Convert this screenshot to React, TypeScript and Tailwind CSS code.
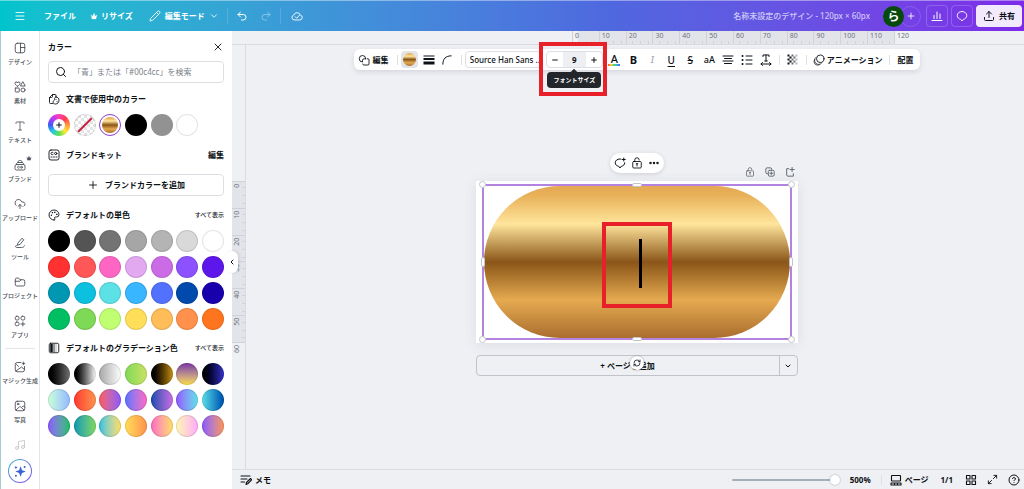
import type { ReactNode } from 'react';
import { useState } from 'react';
import {
    ChevronDown,
    ChevronLeft,
    CircleQuestionMark,
    CloudUpload,
    Ellipsis,
    Maximize2,
    Menu,
    Minus,
    Music,
    Palette,
    Pencil,
    Plus,
    Redo2,
    RefreshCw,
    Search,
    Type,
    Undo2,
    Upload,
    X
} from 'lucide-react';

interface IconProps {
    className?: string;
    children: ReactNode;
}

// Base for all icons that lucide doesn't have
function Icon({ className = 'size-3', children }: IconProps) {
    return (
        <svg
            viewBox="0 0 24 24"
            className={`shrink-0 ${className}`}
            fill="none"
            stroke="currentColor"
            strokeWidth="1.8"
            strokeLinecap="round"
            strokeLinejoin="round"
            aria-hidden="true"
        >
            {children}
        </svg>
    );
}

const Crown = ({ className }: { className: string }) => (
    <Icon className={className}>
        <path d="M6 21h12l3-13-5 5-4-10-4 10-5-5z" fill="currentColor" strokeWidth="0.500" />
    </Icon>
);

const LockIcon = ({ className }: { className: string }) => (
    <Icon className={className}>
        <rect x="3.500" y="9" width="17" height="13" rx="2" />
        <path d="M7.500 9V6a4.500 4.500 0 0 1 9 0M12 13v5M10.500 13.500h3" />
    </Icon>
);

const BubbleIcon = ({ className }: { className: string }) => (
    <Icon className={className}>
        <path d="M12 3c5.500 0 9.500 3.400 9.500 8 0 4-3 7-7 7.800L12 22l-2.500-3.200c-4-.8-7-3.800-7-7.800 0-4.600 4-8 9.500-8z" />
    </Icon>
);

const sideItems = [
    {
        label: 'デザイン',
        icon: (
            <Icon>
                <rect x="2.500" y="2.500" width="19" height="19" rx="4" />
                <path d="M13 2.500v19M13 11h8.500" />
            </Icon>
        )
    },
    {
        label: '素材',
        icon: (
            <Icon>
                <path d="M7 10.500C3 8 2 6.500 2 4.800a2.500 2.500 0 0 1 5-.8 2.500 2.500 0 0 1 5 .8C12 6.500 11 8 7 10.500z" />
                <path d="M18 2l4.500 8h-9z" />
                <rect x="2.500" y="14" width="8" height="8" rx="1" />
                <circle cx="18" cy="18" r="4" />
            </Icon>
        )
    },
    { label: 'テキスト', icon: <Type className="size-3" strokeWidth={1.6} /> },
    {
        label: 'ブランド',
        crown: true,
        icon: (
            <Icon>
                <rect x="2" y="11" width="20" height="11" rx="3" />
                <path d="M5 11c0-3 1-4 3-4h8c2 0 3 1 3 4M8 7c0-3 1-4 3-4h2c2 0 3 1 3 4" />
                <path d="M10.500 15a2 2 0 1 0 0 3" />
                <circle cx="15" cy="16.500" r="1.800" />
            </Icon>
        )
    },
    { label: 'アップロード', icon: <CloudUpload className="size-3" strokeWidth={1.8} /> },
    {
        label: 'ツール',
        icon: (
            <Icon>
                <path d="M8 12l8-9.500 3.500 3L12 15l-4.500 1z" />
                <path d="M6 17c-4-1-4 4 0 4h9c3 0 5-1 6-3.500" />
            </Icon>
        )
    },
    {
        label: 'プロジェクト',
        icon: (
            <Icon>
                <path d="M2.500 7a3 3 0 0 1 3-3H9l3 3.500h6.500a3 3 0 0 1 3 3V17a3 3 0 0 1-3 3h-13a3 3 0 0 1-3-3z" />
                <path d="M2.500 10.500h9l2.500-3" />
            </Icon>
        )
    },
    {
        label: 'アプリ',
        icon: (
            <Icon>
                <rect x="2.500" y="2.500" width="7.500" height="7.500" rx="3" />
                <rect x="14" y="2.500" width="7.500" height="7.500" rx="3" />
                <rect x="2.500" y="14" width="7.500" height="7.500" rx="3" />
                <path d="M17.750 14v8M13.750 18h8" />
            </Icon>
        )
    }
];

const solidColors = [
    'bg-black', 'bg-[#545454]', 'bg-[#737373]', 'bg-[#a6a6a6]', 'bg-[#b4b4b4]', 'bg-[#d9d9d9]', 'bg-white',
    'bg-[#ff3131]', 'bg-[#ff5757]', 'bg-[#ff66c4]', 'bg-[#e2a9f1]', 'bg-[#cb6ce6]', 'bg-[#8c52ff]', 'bg-[#5e17eb]',
    'bg-[#0097b2]', 'bg-[#0cc0df]', 'bg-[#5ce1e6]', 'bg-[#38b6ff]', 'bg-[#5271ff]', 'bg-[#004aad]', 'bg-[#1800ad]',
    'bg-[#00bf63]', 'bg-[#7ed957]', 'bg-[#c1ff72]', 'bg-[#ffde59]', 'bg-[#ffbd59]', 'bg-[#ff914d]', 'bg-[#ff751f]'
];

const gradientColors = [
    'bg-linear-to-r from-black to-[#737373]',
    'bg-linear-to-r from-black to-white',
    'bg-linear-to-r from-[#a6a6a6] to-white',
    'bg-linear-to-r from-[#7ed957] to-[#c9e265]',
    'bg-linear-to-r from-black to-[#c89116]',
    'bg-linear-to-b from-[#7a2ea0] to-[#ffde38]',
    'bg-linear-to-r from-black to-[#3533cd]',
    'bg-linear-to-r from-[#cdffd8] to-[#94b9ff]',
    'bg-linear-to-r from-[#ff3131] to-[#ff914d]',
    'bg-linear-to-r from-[#ff5757] to-[#8c52ff]',
    'bg-linear-to-r from-[#5170ff] to-[#ff66c4]',
    'bg-linear-to-r from-[#004aad] to-[#cb6ce6]',
    'bg-linear-to-r from-[#8c52ff] to-[#5ce1e6]',
    'bg-linear-to-r from-[#5de0e6] to-[#004aad]',
    'bg-linear-to-r from-[#8c52ff] to-[#00bf63]',
    'bg-linear-to-r from-[#0097b2] to-[#7ed957]',
    'bg-linear-to-r from-[#0cc0df] to-[#ffde59]',
    'bg-linear-to-r from-[#ffde59] to-[#ff914d]',
    'bg-linear-to-r from-[#ff66c4] to-[#ffde59]',
    'bg-linear-to-r from-[#fff7ad] to-[#ffa9f9]',
    'bg-linear-to-r from-[#8c52ff] to-[#ff914d]'
];

const gold = 'bg-[linear-gradient(180deg,#e5a953_0%,#e8b058_6%,#ffe59c_25%,#8a5518_50%,#e5aa50_75%,#aa6d2e_100%)]';

const Divider = () => <span className="h-2.5 w-px shrink-0 bg-[#dfe0e4]" />;

function Header() {
    return (
        <header className="flex h-[31px] shrink-0 items-center border-t border-white/40 bg-linear-to-r from-[#00c4cc] via-[#4f67df] via-60% to-[#7d2ae8] font-bold text-white">
            <div className="flex flex-1 items-center pl-3.5">
                <button aria-label="メニュー"><Menu className="size-3" strokeWidth={1.8} /></button>
                <button className="ml-[18px]">ファイル</button>
                <button className="ml-3.5 flex items-center gap-[3px]"><Crown className="size-2" />リサイズ</button>
                <button className="ml-4 flex items-center gap-1">
                    <Pencil className="size-3" strokeWidth={1.8} />
                    編集モード
                    <ChevronDown className="size-2.5" />
                </button>
                <span className="ml-2 h-4 w-px bg-white/15" />
                <button className="ml-2" aria-label="元に戻す"><Undo2 className="size-3" /></button>
                <button className="ml-3 opacity-40" aria-label="やり直す"><Redo2 className="size-3" /></button>
                <span className="ml-2 h-4 w-px bg-white/15" />
                <button className="ml-2.5" aria-label="保存済み">
                    <Icon>
                        <path d="M7 20a5 5 0 0 1-1.500-9.800 7 7 0 0 1 13.300 0A5 5 0 0 1 17 20z" />
                        <path d="M8.500 13.500l3 3 5.500-6" />
                    </Icon>
                </button>
            </div>
            <div className="flex items-center gap-[3px] pr-0.5">
                <span className="mr-2.5 font-medium text-white/70">名称未設定のデザイン - 120px × 60px</span>
                <div className="flex">
                    <button className="z-10 size-[21px] rounded-full bg-[#064a0c] text-[12px] leading-[21px]">ら</button>
                    <button className="-ml-1 flex size-[21px] items-center justify-center rounded-full border border-white/15" aria-label="メンバーを追加">
                        <Plus className="size-2.5" />
                    </button>
                </div>
                <button className="ml-0.5 flex size-[22px] items-center justify-center rounded border border-white/20" aria-label="分析">
                    <Icon><path d="M2 21h20M6 17v-6M12 17V4M18 17V8" strokeWidth="2" /></Icon>
                </button>
                <button className="flex size-[22px] items-center justify-center rounded border border-white/20" aria-label="コメント">
                    <BubbleIcon className="size-3" />
                </button>
                <button className="flex h-[22px] items-center gap-1 rounded bg-[#f2e9fd] px-[7px] text-[#0d1216]">
                    <Upload className="size-3" />共有
                </button>
            </div>
        </header>
    );
}

function Sidebar() {
    return (
        <nav className="flex w-10 shrink-0 flex-col border-r border-l border-r-[#e3e5e9] border-l-[#a9cbd2] bg-white text-[6px] leading-2 font-medium text-[#4a4f57]">
            <div className="flex min-h-0 flex-1 flex-col items-center overflow-hidden pt-[11px]">
                {sideItems.map((item) => (
                    <button key={item.label} className="relative flex h-[39px] shrink-0 flex-col items-center gap-1 whitespace-nowrap">
                        {item.icon}
                        {item.crown && <Crown className="absolute -top-1 right-0 size-1.5" />}
                        {item.label}
                    </button>
                ))}
                <hr className="-mt-1.5 mb-3 w-[30px] shrink-0 border-[#e3e5e9]" />
                <button className="flex h-[39px] shrink-0 flex-col items-center gap-1 whitespace-nowrap">
                    <Icon>
                        <path d="M14 3H6.500a4 4 0 0 0-4 4v10.500a4 4 0 0 0 4 4H17a4 4 0 0 0 4-4V11M4 20l11-8 6 5M5 7l4 4" />
                        <path d="M19 1.500l1 2.500 2.500 1L20 6l-1 2.500L18 6l-2.500-1L18 4z" fill="currentColor" strokeWidth="0.500" />
                    </Icon>
                    マジック生成
                </button>
                <button className="flex h-[39px] shrink-0 flex-col items-center gap-1">
                    <Icon>
                        <rect x="2.500" y="2.500" width="19" height="19" rx="4" />
                        <path d="M4 20l6.500-6c1-1 2-1 3 0L20 20M16 14l1.500-1.500c.6-.6 1.400-.6 2 0l2 2" />
                        <circle cx="8" cy="8" r="1.600" />
                    </Icon>
                    写真
                </button>
                <button className="shrink-0 opacity-30" aria-label="オーディオ"><Music className="size-3" strokeWidth={1.8} /></button>
            </div>
            <button
                className="mx-auto mb-1.5 flex size-6 shrink-0 items-center justify-center rounded-full bg-linear-to-br from-[#18b5cd] to-[#7d3be8] p-px"
                aria-label="Canva AI"
            >
                <span className="flex size-full items-center justify-center rounded-full bg-white text-[#3b62d4]">
                    <svg viewBox="0 0 24 24" className="size-3.5" fill="currentColor" aria-hidden="true">
                        <path d="M13 4l2.500 6.500L22 13l-6.500 2.500L13 22l-2.500-6.500L4 13l6.500-2.500z" />
                        <path d="M5 3l1 2 2 1-2 1-1 2-1-2-2-1 2-1z" />
                        <circle cx="20" cy="5" r="1.700" />
                        <circle cx="5" cy="20" r="1.700" />
                    </svg>
                </span>
            </button>
        </nav>
    );
}

function Swatches({ colors }: { colors: string[] }) {
    return (
        <div className="grid grid-cols-[repeat(7,22px)] justify-between gap-y-1">
            {colors.map((color) => (
                <button key={color} aria-label="カラー" className={`size-[22px] rounded-full border border-black/10 bg-origin-border ${color}`} />
            ))}
        </div>
    );
}

function SectionTitle({ icon, title, action }: { icon: ReactNode; title: string; action?: ReactNode }) {
    return (
        <div className="flex h-3 items-center gap-1.5">
            {icon}
            <h2 className="flex-1 whitespace-nowrap">{title}</h2>
            {action}
        </div>
    );
}

function ColorPanel() {
    return (
        <aside className="relative flex w-48 shrink-0 flex-col bg-white px-2 pt-2.5 font-bold">
            <div className="flex h-3 items-center justify-between">
                <h1>カラー</h1>
                <button aria-label="閉じる"><X className="size-3" strokeWidth={1.8} /></button>
            </div>
            <label className="mt-2 flex h-[22px] items-center gap-1.5 rounded border border-[#dcdee3] pl-1.5">
                <Search className="size-3 shrink-0" />
                <input
                    type="search"
                    aria-label="カラーを検索"
                    placeholder="「青」または「#00c4cc」を検索"
                    className="w-full font-normal outline-none placeholder:text-[#7b818a]"
                />
            </label>
            <div className="mt-2.5">
                <SectionTitle
                    title="文書で使用中のカラー"
                    icon={
                        <Icon>
                            <path d="M9 21H5a2 2 0 0 1-2-2V9l6-6h5a2 2 0 0 1 2 2v2M3 9h4a2 2 0 0 0 2-2V3" />
                            <path d="M16 8c4 0 6 3 6 6 0 5-3 8-7 8s-5-2-5-4c0-3 3-2 3-5s1-5 3-5zM16 13h.1M18 17h.1" />
                        </Icon>
                    }
                />
            </div>
            <div className="mt-[9px] grid grid-cols-[repeat(7,22px)] justify-between">
                <button
                    aria-label="新しいカラーを追加"
                    className="flex size-[22px] items-center justify-center rounded-full bg-[conic-gradient(#ff3db8,#ff3b4e,#ff9a3c,#ffe83b,#5ee04f,#28c9e8,#3a5cf5,#b83af5,#ff3db8)]"
                >
                    <span className="flex size-3 items-center justify-center rounded-full bg-white"><Plus className="size-2" strokeWidth={3} /></span>
                </button>
                <button aria-label="カラーなし" className="size-[22px] overflow-hidden rounded-full border border-black/10 bg-[repeating-conic-gradient(#e4e4e7_0%_25%,white_0%_50%)] bg-size-[6px_6px]">
                    <svg viewBox="0 0 20 20" className="size-full" aria-hidden="true"><path d="M3 17L17 3" stroke="#c5223c" strokeWidth="2" /></svg>
                </button>
                <button aria-label="ゴールド" className="size-[22px] rounded-full border border-[#8b3dcf] p-0.5">
                    <span className={`block size-full rounded-full ${gold}`} />
                </button>
                <button aria-label="黒" className="size-[22px] rounded-full bg-black" />
                <button aria-label="グレー" className="size-[22px] rounded-full bg-[#929292]" />
                <button aria-label="白" className="size-[22px] rounded-full border border-black/10 bg-white" />
            </div>
            <div className="mt-[13px]">
                <SectionTitle
                    title="ブランドキット"
                    icon={
                        <Icon>
                            <rect x="2" y="2" width="20" height="20" rx="4" />
                            <path d="M10 7a2.500 2.500 0 1 0 0 4M6 16h2M11 16h2M16 16h2" />
                            <circle cx="15.500" cy="9" r="2.300" />
                        </Icon>
                    }
                    action={<button>編集</button>}
                />
            </div>
            <button className="mt-[13px] flex h-[22px] items-center justify-center gap-1.5 rounded border border-[#dcdee3]">
                <Plus className="size-3" strokeWidth={1.8} />ブランドカラーを追加
            </button>
            <div className="mt-[13px] mb-[9px]">
                <SectionTitle
                    title="デフォルトの単色"
                    icon={<Palette className="size-3" strokeWidth={1.8} />}
                    action={<button className="text-[6px] font-medium">すべて表示</button>}
                />
            </div>
            <Swatches colors={solidColors} />
            <div className="mt-3 mb-[9px]">
                <SectionTitle
                    title="デフォルトのグラデーション色"
                    icon={
                        <Icon>
                            <rect x="2.500" y="2.500" width="19" height="19" rx="3" />
                            <path d="M7 4v16" strokeWidth="5" strokeLinecap="butt" />
                            <path d="M12 4v16" strokeWidth="3" strokeLinecap="butt" strokeOpacity="0.600" />
                            <path d="M16 4v16" strokeWidth="2" strokeLinecap="butt" strokeOpacity="0.300" />
                        </Icon>
                    }
                    action={<button className="text-[6px] font-medium">すべて表示</button>}
                />
            </div>
            <Swatches colors={gradientColors} />
            {/* handle that folds the panel away */}
            <button
                aria-label="パネルを閉じる"
                className="absolute top-[220px] -right-1.5 z-10 flex h-[22px] w-3 items-center justify-center rounded-full bg-white shadow-[1px_0_3px_rgba(0,0,0,0.12)]"
            >
                <ChevronLeft className="size-2" strokeWidth={3} />
            </button>
        </aside>
    );
}

const marksX = [0, 10, 20, 30, 40, 50, 60, 70, 80, 90, 100, 110];
const marksY = [0, 10, 20, 30, 40, 50];

function TopRuler() {
    return (
        <div className="flex h-3.5 shrink-0 overflow-hidden border-b border-[#d9dbe1] pl-[340px] text-[7px] leading-[10px] text-[#6d727b]">
            <div className="flex w-[322px] shrink-0 bg-linear-to-r from-transparent from-2% via-[#e3e4ea] via-2% to-[#e3e4ea]">
                {marksX.map((mark) => (
                    <div key={mark} className="flex flex-1 flex-col justify-between border-l border-[#d0d2d9] pl-0.5">
                        {mark}
                        <span className="flex h-1 justify-around">
                            <i className="w-px bg-[#d0d2d9]" /><i className="w-px bg-[#d0d2d9]" /><i className="w-px bg-[#d0d2d9]" />
                        </span>
                    </div>
                ))}
            </div>
            <div className="border-l border-[#d0d2d9] pl-0.5">120</div>
        </div>
    );
}

function SideRuler() {
    return (
        <div className="flex w-3.5 shrink-0 flex-col overflow-hidden border-r border-[#d9dbe1] pt-[136px] text-[7px] leading-[10px] text-[#6d727b]">
            <div className="flex h-[161px] shrink-0 flex-col bg-[#e3e4ea]">
                {marksY.map((mark) => (
                    <div key={mark} className="flex flex-1 justify-between border-t border-[#d0d2d9] pt-0.5">
                        <span className="rotate-180 text-right [writing-mode:vertical-rl]">{mark}</span>
                        <span className="flex w-[3px] flex-col justify-around">
                            <i className="h-px bg-[#d0d2d9]" /><i className="h-px bg-[#d0d2d9]" /><i className="h-px bg-[#d0d2d9]" />
                        </span>
                    </div>
                ))}
            </div>
            <div className="border-t border-[#d0d2d9] pt-0.5">
                <span className="block rotate-180 text-right [writing-mode:vertical-rl]">60</span>
            </div>
        </div>
    );
}

const toolButton = 'flex w-[19px] shrink-0 items-center justify-center';

function Toolbar() {
    const [fontSize, setFontSize] = useState(9);

    return (
        <div className="flex h-[21px] w-[566px] shrink-0 items-center rounded-md bg-white pr-1.5 pl-1 font-bold whitespace-nowrap shadow-[0_2px_5px_rgba(60,70,90,0.15)]">
            <button className="mr-2 flex items-center gap-[3px]">
                <Icon>
                    <path d="M15.500 9.500A6.500 6.500 0 1 0 9 16v-3.500a3 3 0 0 1 3-3zM18.500 9.500H20a2 2 0 0 1 2 2V20a2 2 0 0 1-2 2h-8.500a2 2 0 0 1-2-2" />
                </Icon>
                編集
            </button>
            <Divider />
            <button aria-label="塗りつぶし" className="ml-[3px] flex size-[17px] shrink-0 items-center justify-center rounded bg-[#e3e4e7]">
                <span className={`size-[13px] rounded-full ${gold}`} />
            </button>
            <button aria-label="枠線" className="ml-0.5 flex w-[19px] justify-center">
                <Icon><g stroke="none" fill="currentColor"><path d="M1 3h22v2H1zM1 8h22v4H1zM1 15h22v6H1z" /></g></Icon>
            </button>
            <button aria-label="角の丸み" className={toolButton}>
                <Icon className="size-2.5"><path d="M2 22C2 9 9 2 22 2" strokeWidth="2.400" /></Icon>
            </button>
            <span className="w-1 shrink-0" />
            <Divider />
            <button className="ml-[3px] h-[17px] w-[77px] shrink-0 rounded border border-[#dcdee3] pl-1 text-left font-medium">
                Source Han Sans ...
            </button>
            <div className="relative ml-1 flex h-[17px] w-[57px] shrink-0 rounded border border-[#dcdee3]">
                <button aria-label="小さく" className="flex flex-1 items-center justify-center" onClick={() => setFontSize(fontSize - 1)}>
                    <Minus className="size-2" strokeWidth={3} />
                </button>
                <input
                    aria-label="フォントサイズ"
                    className="w-[23px] bg-[#eeeff2] text-center outline-none"
                    value={fontSize}
                    onChange={(e) => setFontSize(Number(e.target.value) || 0)}
                />
                <button aria-label="大きく" className="flex flex-1 items-center justify-center" onClick={() => setFontSize(fontSize + 1)}>
                    <Plus className="size-2" strokeWidth={3} />
                </button>
                <div role="tooltip" className="absolute top-5 left-1/2 z-10 flex h-4 w-[54px] -translate-x-1/2 items-center justify-center rounded bg-[#22262b] text-[6px] text-white">
                    <span className="absolute -top-0.5 size-1.5 rotate-45 bg-[#22262b]" />
                    <span className="relative">フォントサイズ</span>
                </div>
                <span className="pointer-events-none absolute -top-2.5 -left-2 z-20 h-[54px] w-[68px] border-4 border-[#e8202a]" />
            </div>
            <button aria-label="テキストの色" className="ml-0.5 flex w-[19px] shrink-0 flex-col items-center font-medium">
                <span className="text-[11px] leading-[11px]">A</span>
                <span className="h-0.5 w-3 bg-[linear-gradient(90deg,#ff4d3d,#ffd53d,#4fd85a,#2cb8f0,#7a4bff)]" />
            </button>
            <button className={`${toolButton} text-[11px]`} aria-label="太字">B</button>
            <button className={`${toolButton} font-serif text-[11px] font-normal text-[#a5a8ae] italic`} aria-label="斜体">I</button>
            <button className={`${toolButton} text-[10px] font-medium underline underline-offset-2`} aria-label="下線">U</button>
            <button className={`${toolButton} text-[10px] font-medium line-through`} aria-label="取り消し線">S</button>
            <button className={`${toolButton} text-[9px] font-medium`} aria-label="大文字">aA</button>
            <button className={toolButton} aria-label="配置を揃える">
                <Icon><path d="M2 4h20M5 9h14M2 14h20M5 19h14" strokeWidth="2" /></Icon>
            </button>
            <button className={toolButton} aria-label="リスト">
                <Icon><path d="M10 4h12M10 12h12M10 20h12" strokeWidth="2" /><path d="M3 4h.1M3 12h.1M3 20h.1" strokeWidth="4" /></Icon>
            </button>
            <button className={toolButton} aria-label="スペース">
                <Icon><path d="M6 5V2h12v3M12 2v12M9.500 14h5M2 20h20M5 17l-3 3 3 3M19 17l3 3-3 3" strokeWidth="2" /></Icon>
            </button>
            <span className="w-[3px] shrink-0" />
            <Divider />
            <button className="ml-1 flex w-[19px] shrink-0 justify-center" aria-label="透明度">
                <Icon>
                    <g stroke="none" fill="currentColor">
                        <path d="M1 1h4v4H1zM5 5h4v4H5zM1 9h4v4H1zM5 13h4v4H5zM1 17h4v4H1z" />
                        <path d="M9 1h4v4H9zM9 9h4v4H9zM9 17h4v4H9zM13 5h4v4h-4zM13 13h4v4h-4z" opacity="0.600" />
                        <path d="M17 1h4v4h-4zM17 9h4v4h-4zM17 17h4v4h-4z" opacity="0.300" />
                    </g>
                </Icon>
            </button>
            <span className="w-[3px] shrink-0" />
            <Divider />
            <button className="mr-1.5 ml-1.5 flex items-center gap-0.5">
                <Icon>
                    <circle cx="14.500" cy="9.500" r="7.500" />
                    <path d="M5.500 7a8 8 0 0 0 11.500 11.500M3 11a7.500 7.500 0 0 0 10 10.500" strokeWidth="1.400" />
                </Icon>
                アニメーション
            </button>
            <Divider />
            <button className="ml-2">配置</button>
        </div>
    );
}

const handle = 'absolute border border-[#c3c5cc] bg-white rounded-full';

function Canvas() {
    return (
        <main className="flex min-w-0 flex-1 flex-col items-center pt-1 pl-[3px]">
            <Toolbar />
            <div className="mt-[83px] grid h-7 w-[322px] shrink-0 grid-cols-[1fr_auto_1fr]">
                <div className="col-start-2 flex h-5 items-center gap-[5px] self-start rounded-full bg-white px-1 shadow-[0_1px_4px_rgba(60,70,90,0.18)]">
                    <button aria-label="コメントを追加">
                        <Icon>
                            <path d="M14 4.300A10 10 0 0 0 12 4c-5.500 0-9.500 3-9.500 7.500 0 4 3 6.500 7 7.200L12 22l2.500-3.300c4-.8 7-3.200 7-7.200M19.500 2v6M16.500 5h6" strokeWidth="2" />
                        </Icon>
                    </button>
                    <button aria-label="ロック"><LockIcon className="size-3" /></button>
                    <button aria-label="その他"><Ellipsis className="size-3" strokeWidth={3} /></button>
                </div>
                <div className="col-start-3 mr-[3px] mb-1 flex gap-2.5 self-end justify-self-end text-[#5b6069]">
                    <button aria-label="ページをロック"><LockIcon className="size-2.5" /></button>
                    <button aria-label="ページを複製">
                        <Icon className="size-2.5">
                            <path d="M6 16H5a3 3 0 0 1-3-3V5a3 3 0 0 1 3-3h8a3 3 0 0 1 3 3v1M15 12v6M12 15h6" strokeWidth="2.200" />
                            <rect x="8" y="8" width="14" height="14" rx="3" strokeWidth="2.200" />
                        </Icon>
                    </button>
                    <button aria-label="ページを追加">
                        <Icon className="size-2.5"><path d="M9 4H4v15a3 3 0 0 0 3 3h13v-6M17 1v10M12 6h10" strokeWidth="2.200" /></Icon>
                    </button>
                </div>
            </div>
            <div className="h-[162px] w-[322px] shrink-0 bg-white px-1.5 pt-[3px] pb-[3px] shadow-[0_2px_12px_rgba(60,70,90,0.1)]">
                <div className="relative flex h-full items-center justify-center border-2 border-[#b284e0]">
                    <div className={`flex size-full items-center justify-center rounded-full pt-1.5 ${gold}`}>
                        <div className="flex h-[86px] w-[70px] items-center justify-center border-4 border-[#e8202a] pb-1 pl-2">
                            <span className="h-[49px] w-[3px] bg-black" />
                        </div>
                    </div>
                    <span className={`${handle} -top-[5px] -left-[5px] size-[7px]`} />
                    <span className={`${handle} -top-[5px] -right-[5px] size-[7px]`} />
                    <span className={`${handle} -bottom-[5px] -left-[5px] size-[7px]`} />
                    <span className={`${handle} -right-[5px] -bottom-[5px] size-[7px]`} />
                    <span className={`${handle} -top-[3px] left-1/2 h-1 w-2.5 -translate-x-1/2`} />
                    <span className={`${handle} -bottom-[3px] left-1/2 h-1 w-2.5 -translate-x-1/2`} />
                    <span className={`${handle} top-1/2 -left-[3px] h-2.5 w-1 -translate-y-1/2`} />
                    <span className={`${handle} top-1/2 -right-[3px] h-2.5 w-1 -translate-y-1/2`} />
                    <button
                        aria-label="回転"
                        className="absolute -bottom-8 left-1/2 flex size-3.5 -translate-x-1/2 items-center justify-center rounded-full bg-white shadow-[0_0_2px_rgba(0,0,0,0.4)]"
                    >
                        <RefreshCw className="size-2" strokeWidth={2.4} />
                    </button>
                </div>
            </div>
            <div className="mt-3 flex h-[21px] w-[322px] shrink-0 rounded border border-[#c0c3ca] font-bold">
                <button className="flex-1">+ ページを追加</button>
                <button aria-label="ページの種類" className="flex w-[18px] items-center justify-center border-l border-[#c0c3ca]">
                    <ChevronDown className="size-2" strokeWidth={3} />
                </button>
            </div>
        </main>
    );
}

function Footer() {
    return (
        <footer className="flex h-5 shrink-0 items-center border-t border-[#dadce1] pr-1 pl-2 font-bold">
            <button className="flex items-center gap-[3px]">
                <Icon><path d="M2 4h18M2 10h12M2 16h7M12 21l1-4 8-8 2.500 2.500-8 8z" strokeWidth="2.200" /></Icon>
                メモ
            </button>
            <div className="ml-auto flex items-center">
                <input
                    type="range"
                    aria-label="ズーム"
                    min="10"
                    max="500"
                    defaultValue="500"
                    className="h-3 w-[108px] appearance-none bg-transparent [&::-webkit-slider-runnable-track]:h-0.5 [&::-webkit-slider-runnable-track]:rounded-full [&::-webkit-slider-runnable-track]:bg-[#a4afbb] [&::-webkit-slider-thumb]:-mt-1 [&::-webkit-slider-thumb]:size-2.5 [&::-webkit-slider-thumb]:appearance-none [&::-webkit-slider-thumb]:rounded-full [&::-webkit-slider-thumb]:bg-white [&::-webkit-slider-thumb]:shadow-[0_0_2px_rgba(0,0,0,0.35)]"
                />
                <button className="mr-2.5 ml-2.5">500%</button>
                <Divider />
                <button className="ml-2 flex items-center gap-[3px]">
                    <Icon><rect x="3" y="3" width="18" height="11" rx="1" strokeWidth="2.200" /><path d="M2 18h20v4H2zM9 18v4M15 18v4" strokeWidth="2.200" /></Icon>
                    ページ
                </button>
                <span className="ml-3">1/1</span>
                <button className="ml-3" aria-label="グリッド表示">
                    <Icon>
                        <g strokeWidth="2.200">
                            <rect x="3" y="3" width="7" height="7" /><rect x="14" y="3" width="7" height="7" />
                            <rect x="3" y="14" width="7" height="7" /><rect x="14" y="14" width="7" height="7" />
                        </g>
                    </Icon>
                </button>
                <button className="ml-2.5" aria-label="全画面表示"><Maximize2 className="size-[11px]" /></button>
                <button className="ml-2.5" aria-label="ヘルプ"><CircleQuestionMark className="size-3" /></button>
            </div>
        </footer>
    );
}

export default function App() {
    return (
        <div lang="ja" className="flex h-screen flex-col overflow-hidden bg-[#eff0f4] font-['Noto_Sans','Noto_Sans_CJK_JP',sans-serif] text-[8px] leading-3 text-[#0d1216]">
            <Header />
            <div className="flex min-h-0 flex-1">
                <Sidebar />
                <ColorPanel />
                <div className="flex min-w-0 flex-1 flex-col">
                    <TopRuler />
                    <div className="flex min-h-0 flex-1">
                        <SideRuler />
                        <Canvas />
                    </div>
                    <Footer />
                </div>
            </div>
        </div>
    );
}
